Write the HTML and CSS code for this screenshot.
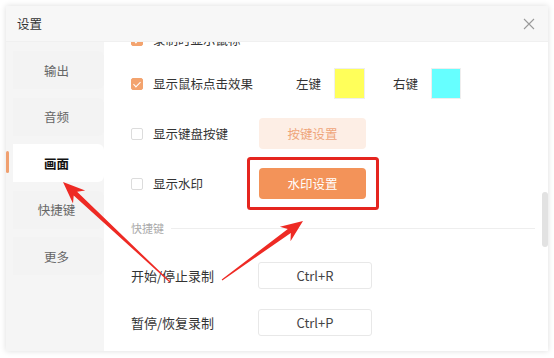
FILE: index.html
```html
<!DOCTYPE html>
<html lang="zh-CN">
<head>
    <meta charset="UTF-8">
    <meta name="viewport" content="width=device-width, initial-scale=1.0">
    <title>设置</title>
    <link rel="stylesheet" href="styles.css">
</head>
<body>
    <div class="dialog">
        <div class="dialog-header">
            <span class="title">设置</span>
            <span class="close">
                <svg width="12" height="12" viewBox="0 0 12 12"><path d="M1 1 L11 11 M11 1 L1 11" stroke="#9a9a9a" stroke-width="1.1" fill="none"/></svg>
            </span>
        </div>
        <div class="dialog-body">
            <ul class="side-nav">
                <li>输出</li>
                <li>音频</li>
                <li class="active">画面</li>
                <li>快捷键</li>
                <li>更多</li>
            </ul>
            <div class="panel">
                <div class="panel-inner">
                    <div class="row first">
                        <label class="check"><span class="box checked"></span>录制时显示鼠标</label>
                    </div>
                    <div class="row">
                        <label class="check"><span class="box checked"></span>显示鼠标点击效果</label>
                        <div class="colors">
                            <span class="color-label">左键</span>
                            <span class="swatch yellow"></span>
                            <span class="color-label">右键</span>
                            <span class="swatch cyan"></span>
                        </div>
                    </div>
                    <div class="row">
                        <label class="check"><span class="box"></span>显示键盘按键</label>
                        <button class="btn light">按键设置</button>
                    </div>
                    <div class="row">
                        <label class="check"><span class="box"></span>显示水印</label>
                        <button class="btn primary">水印设置</button>
                    </div>

                    <div class="section-title"><span>快捷键</span><i></i></div>

                    <div class="shortcut">
                        <span class="shortcut-name">开始/停止录制</span>
                        <span class="key-box">Ctrl+R</span>
                    </div>
                    <div class="shortcut">
                        <span class="shortcut-name">暂停/恢复录制</span>
                        <span class="key-box">Ctrl+P</span>
                    </div>
                </div>
                <div class="scroll-thumb"></div>
            </div>
        </div>
    </div>

    <!-- annotation marks -->
    <svg class="marks" width="554" height="358" viewBox="0 0 554 358">
        <rect x="248.5" y="158.5" width="129" height="50" rx="2" fill="none" stroke="#e5251f" stroke-width="3"/>
        <polygon fill="#ee2a24" points="170.3,281.6 77.1,191.8 85.2,190.4 63,182 73.0,203.6 73.7,195.4 169.7,282.4"/>
        <polygon fill="#ee2a24" points="222.3,280.4 290.8,233.0 290.5,241.3 303,221 279.9,226.7 287.8,229.0 221.7,279.6"/>
    </svg>
</body>
</html>
```

FILE: styles.css
```css
* {
    box-sizing: border-box;
}

body {
    margin: 0;
    background-color: #fff;
    font-family: "Noto Sans CJK SC", "Noto Sans", sans-serif;
    font-size: 12.5px;
    color: #333;
    position: relative;
    width: 554px;
    height: 358px;
    overflow: hidden;
}

.dialog {
    margin: 6px 0 0 6px;
    width: 542px;
    height: 345px;
    background-color: #fff;
    box-shadow: 0 0 6px rgba(0, 0, 0, 0.14);
    display: flex;
    flex-direction: column;
}

.dialog-header {
    height: 36px;
    flex-shrink: 0;
    background-color: #f7f7f7;
    border-bottom: 1px solid #f0f0f0;
    display: flex;
    align-items: center;
    justify-content: space-between;
    padding: 0 13px 0 11px;
}

.title {
    color: #333;
}

.close {
    display: flex;
    width: 12px;
    height: 12px;
}

.dialog-body {
    flex: 1;
    display: flex;
    min-height: 0;
}

/* menu kiri */
.side-nav {
    list-style: none;
    margin: 0;
    padding: 9px 0 0 0;
    width: 98px;
    flex-shrink: 0;
    background-color: #f5f5f5;
    display: flex;
    flex-direction: column;
    gap: 8.5px;
    position: relative;
}

.side-nav li {
    height: 38px;
    margin-left: 7px;
    border-radius: 0 6px 6px 0;
    background-color: #f3f3f3;
    color: #666;
    display: flex;
    align-items: center;
    justify-content: center;
    padding-right: 4px;
    position: relative;
}

.side-nav li.active {
    background-color: #fff;
    color: #111;
    font-weight: bold;
}

.side-nav li.active::before {
    content: "";
    position: absolute;
    left: -7px;
    top: 7px;
    width: 3px;
    height: 22px;
    border-radius: 2px;
    background-color: #f0a070;
}

/* isi kanan */
.panel {
    flex: 1;
    position: relative;
    overflow: hidden;
    padding: 0 13px 0 27px;
}

.panel-inner {
    margin-top: -18px;
}

.row {
    display: flex;
    align-items: center;
    height: 31px;
    margin-bottom: 19px;
}

.row.first {
    margin-bottom: 13px;
}

.check {
    width: 128px;
    flex-shrink: 0;
    display: flex;
    align-items: center;
    white-space: nowrap;
}

.box {
    width: 12px;
    height: 12px;
    border: 1px solid #dcdcdc;
    border-radius: 2px;
    background-color: #fff;
    margin-right: 10px;
    position: relative;
    flex-shrink: 0;
}

.box.checked {
    background-color: #f3a36e;
    border-color: #f3a36e;
}

.box.checked::after {
    content: "";
    position: absolute;
    left: 3px;
    top: 1px;
    width: 3px;
    height: 6px;
    border: solid #fff;
    border-width: 0 1.5px 1.5px 0;
    transform: rotate(45deg);
}

.colors {
    display: flex;
    align-items: center;
    margin-left: 37px;
}

.color-label {
    margin-right: 13px;
}

.swatch {
    width: 31px;
    height: 31px;
    border: 1px solid #eee;
    margin-right: 28px;
}

.swatch.yellow {
    background-color: #ffff5a;
}

.swatch.cyan {
    width: 30px;
    background-color: #66ffff;
    margin-right: 0;
}

.btn {
    width: 107px;
    height: 31px;
    border: none;
    border-radius: 4px;
    font-family: inherit;
    font-size: 12.5px;
    cursor: pointer;
}

.btn.light {
    background-color: #fdeee5;
    color: #efa57a;
}

.btn.primary {
    background-color: #f39359;
    color: #fff;
}

.section-title {
    display: flex;
    align-items: center;
    height: 14px;
    margin-top: 22px;
    font-size: 11px;
    color: #aaa;
}

.section-title i {
    flex: 1;
    height: 1px;
    background-color: #eeeeee;
    margin-left: 7px;
}

.shortcut {
    display: flex;
    align-items: center;
    height: 27px;
    margin-top: 27px;
}

.shortcut + .shortcut {
    margin-top: 20px;
}

.shortcut-name {
    width: 127px;
    flex-shrink: 0;
    font-size: 13px;
}

.key-box {
    width: 114px;
    height: 27px;
    border: 1px solid #e8e8e8;
    border-radius: 3px;
    display: flex;
    align-items: center;
    justify-content: center;
    font-size: 13px;
    color: #444;
}

.scroll-thumb {
    position: absolute;
    right: 0;
    top: 150px;
    width: 6px;
    height: 55px;
    border-radius: 3px;
    background-color: #e2e2e2;
}

/* tanda merah di atas */
.marks {
    position: absolute;
    left: 0;
    top: 0;
    pointer-events: none;
}
```
